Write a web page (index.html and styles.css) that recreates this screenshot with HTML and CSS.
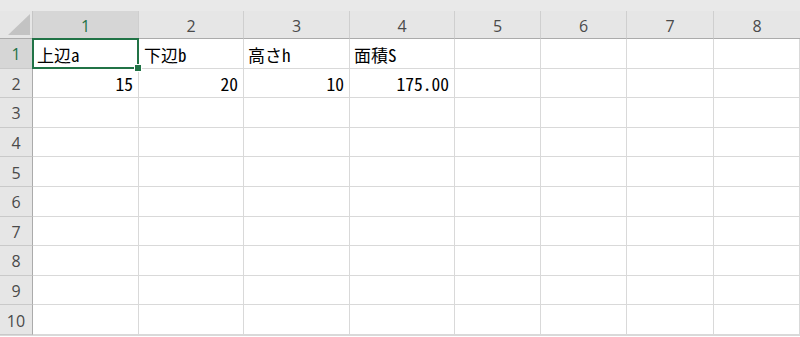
FILE: index.html
```html
<!DOCTYPE html>
<html lang="ja">
<head>
  <meta charset="UTF-8" />
  <title>Sheet1</title>
  <link rel="stylesheet" href="styles.css">
</head>
<body>
  <div class="ribbon-edge"></div>
  <div class="sheet">
    <div class="corner"><span class="corner-tri"></span></div>
    <div class="col-head active">1</div>
    <div class="col-head">2</div>
    <div class="col-head">3</div>
    <div class="col-head">4</div>
    <div class="col-head">5</div>
    <div class="col-head">6</div>
    <div class="col-head">7</div>
    <div class="col-head last">8</div>

    <div class="row-head active">1</div>
    <div class="cell sel">上辺a</div>
    <div class="cell text-b">下辺b</div>
    <div class="cell">高さh</div>
    <div class="cell">面積S</div>
    <div class="cell"></div><div class="cell"></div><div class="cell"></div><div class="cell"></div>

    <div class="row-head">2</div>
    <div class="cell num">15</div>
    <div class="cell num">20</div>
    <div class="cell num">10</div>
    <div class="cell num">175.00</div>
    <div class="cell"></div><div class="cell"></div><div class="cell"></div><div class="cell"></div>

    <div class="row-head">3</div>
    <div class="cell"></div><div class="cell"></div><div class="cell"></div><div class="cell"></div>
    <div class="cell"></div><div class="cell"></div><div class="cell"></div><div class="cell"></div>

    <div class="row-head">4</div>
    <div class="cell"></div><div class="cell"></div><div class="cell"></div><div class="cell"></div>
    <div class="cell"></div><div class="cell"></div><div class="cell"></div><div class="cell"></div>

    <div class="row-head">5</div>
    <div class="cell"></div><div class="cell"></div><div class="cell"></div><div class="cell"></div>
    <div class="cell"></div><div class="cell"></div><div class="cell"></div><div class="cell"></div>

    <div class="row-head">6</div>
    <div class="cell"></div><div class="cell"></div><div class="cell"></div><div class="cell"></div>
    <div class="cell"></div><div class="cell"></div><div class="cell"></div><div class="cell"></div>

    <div class="row-head">7</div>
    <div class="cell"></div><div class="cell"></div><div class="cell"></div><div class="cell"></div>
    <div class="cell"></div><div class="cell"></div><div class="cell"></div><div class="cell"></div>

    <div class="row-head">8</div>
    <div class="cell"></div><div class="cell"></div><div class="cell"></div><div class="cell"></div>
    <div class="cell"></div><div class="cell"></div><div class="cell"></div><div class="cell"></div>

    <div class="row-head">9</div>
    <div class="cell"></div><div class="cell"></div><div class="cell"></div><div class="cell"></div>
    <div class="cell"></div><div class="cell"></div><div class="cell"></div><div class="cell"></div>

    <div class="row-head">10</div>
    <div class="cell"></div><div class="cell"></div><div class="cell"></div><div class="cell"></div>
    <div class="cell"></div><div class="cell"></div><div class="cell"></div><div class="cell"></div>
  </div>
</body>
</html>
```

FILE: styles.css
```css
/* Reset */
* {
  box-sizing: border-box;
  margin: 0;
  padding: 0;
}
body {
  width: 800px;
  height: 337px;
  overflow: hidden;
  background: #fff;
}
.ribbon-edge {
  height: 11px;
  background: #e9e9e9;
}
/* Grid of the worksheet */
.sheet {
  display: grid;
  grid-template-columns: 33px 106px 105px 106px 105px 86px 86px 87px 86px;
  grid-template-rows: 28px repeat(10, 29.6px);
  border-bottom: 1px solid #d9d9d9;
}
.corner {
  position: relative;
  background: #e6e6e6;
  border-right: 1px solid #c6c6c6;
  border-bottom: 1px solid #ababab;
}
.corner-tri {
  position: absolute;
  right: 2px;
  bottom: 3px;
  width: 0;
  height: 0;
  border-left: 22px solid transparent;
  border-bottom: 21px solid #c3c3c3;
}
.col-head {
  display: flex;
  align-items: center;
  justify-content: center;
  padding-top: 2px;
  background: #e6e6e6;
  border-right: 1px solid #cfcfcf;
  border-bottom: 1px solid #ababab;
  font-family: "Open Sans", "Noto Sans", sans-serif;
  font-size: 16px;
  color: #4a4a4a;
}
.col-head.last {
  border-right: none;
}
.row-head {
  display: flex;
  align-items: center;
  justify-content: center;
  padding-top: 2px;
  background: #e6e6e6;
  border-right: 1px solid #ababab;
  border-bottom: 1px solid #c9c9c9;
  font-family: "Open Sans", "Noto Sans", sans-serif;
  font-size: 16px;
  color: #4a4a4a;
}
.col-head.active,
.row-head.active {
  background: #d6d6d6;
  color: #217346;
}
.col-head.active {
  border-bottom: 1px solid #8a8a8a;
}
/* Cells */
.cell {
  display: flex;
  align-items: center;
  padding: 2px 4px 0;
  border-right: 1px solid #d9d9d9;
  border-bottom: 1px solid #d9d9d9;
  font-family: "Noto Sans CJK JP", sans-serif;
  font-feature-settings: "hwid";
  font-size: 17px;
  line-height: 1;
  color: #000;
  white-space: nowrap;
}
.cell.text-b {
  padding-left: 5px;
}
.cell.num {
  justify-content: flex-end;
  padding-right: 5px;
  font-size: 17.5px;
}
/* Selected cell */
.cell.sel {
  position: relative;
}
.cell.sel::after {
  content: "";
  position: absolute;
  top: -1px;
  left: -1px;
  right: -1px;
  bottom: -1px;
  border: 2px solid #217346;
}
.cell.sel::before {
  content: "";
  position: absolute;
  right: -4px;
  bottom: -4px;
  width: 6px;
  height: 6px;
  background: #217346;
  border: 1px solid #fff;
  z-index: 2;
}
```
